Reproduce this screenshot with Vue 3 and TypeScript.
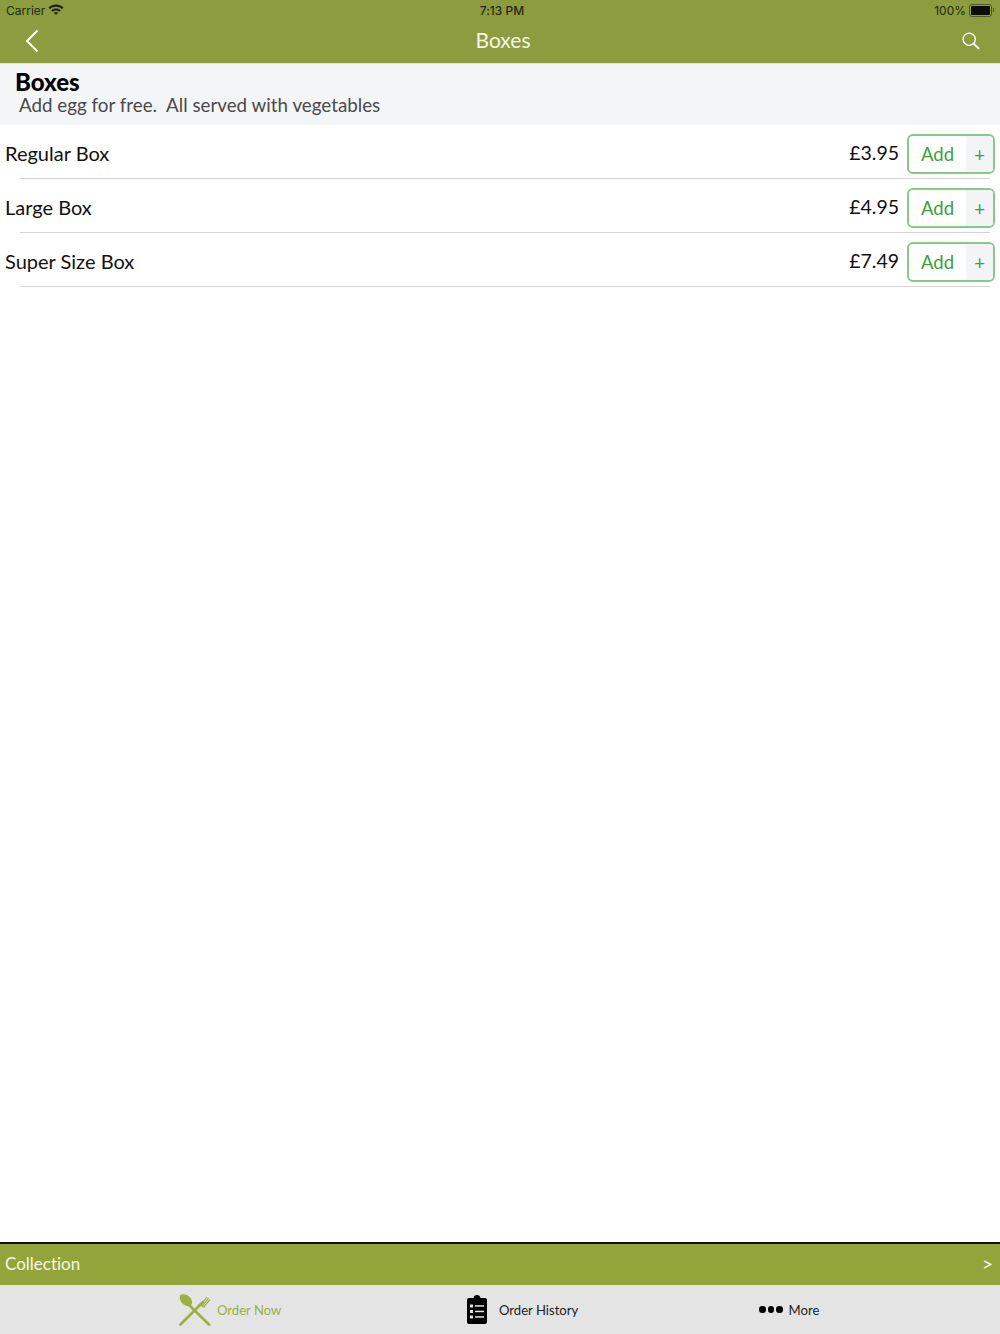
<template>
  <div class="page">
    <header class="top">
      <div class="status">
        <div class="status__left">
          <span>Carrier</span>
          <svg class="wifi" width="16" height="11" viewBox="0 0 16 11">
            <path d="M0.5 3.6 C4.7 -0.4 11.3 -0.4 15.5 3.6 L14 5.2 C10.6 2 5.4 2 2 5.2 Z" />
            <path d="M3.2 6.2 C5.9 3.8 10.1 3.8 12.8 6.2 L11.3 7.7 C9.4 6 6.6 6 4.7 7.7 Z" />
            <path d="M5.9 8.8 C7.1 7.8 8.9 7.8 10.1 8.8 L8 11 Z" />
          </svg>
        </div>
        <span class="status__time">7:13 PM</span>
        <div class="status__right">
          <span>100%</span>
          <span class="battery"><span class="battery__fill"></span></span>
          <span class="battery__tip"></span>
        </div>
      </div>
      <nav class="nav">
        <svg class="nav__back" width="14" height="24" viewBox="0 0 14 24">
          <path d="M12.5 1.5 L2 12 L12.5 22.5" />
        </svg>
        <span class="nav__title">Boxes</span>
        <svg class="nav__search" width="18" height="18" viewBox="0 0 20 20">
          <circle cx="8" cy="8" r="6.8" />
          <path d="M12.8 12.8 L18.8 18.6" class="nav__handle" />
        </svg>
      </nav>
    </header>

    <section class="intro">
      <h1>Boxes</h1>
      <p>Add egg for free.&nbsp; All served with vegetables</p>
    </section>

    <main class="list">
      <div v-for="item in items" :key="item.name" class="row">
        <span class="row__name">{{ item.name }}</span>
        <span class="row__price">{{ item.price }}</span>
        <button class="add" type="button">
          <span class="add__label">Add</span>
          <span class="add__plus">+</span>
        </button>
      </div>
    </main>

    <footer class="bottom">
      <div class="basket">
        <span>Collection</span>
        <span class="basket__arrow">&gt;</span>
      </div>
      <div class="tabs">
        <div class="tab tab--active tab--order">
          <svg width="32" height="32" viewBox="0 0 32 32">
            <path class="cutlery-line" d="M8 9 L30 30.5" />
            <path class="cutlery-line" d="M24 8 L1.5 30.5" />
            <path class="cutlery-fill" d="M1.2 1 C4.4 -0.8 10 1 12.2 5 C14 8.4 12.8 11.4 10.4 12 C6.8 12.8 2.6 9.8 1.2 6 C0.6 4.2 0.4 2.2 1.2 1 Z" />
            <path class="cutlery-fork" d="M22 10.5 L28 3 M23.6 11.6 L29.6 4.2 M25.2 12.4 L31 5.6 M22 10.5 C22.6 12.4 24.6 13.4 26 12.4" />
          </svg>
          <span>Order Now</span>
        </div>
        <div class="tab tab--history">
          <svg width="20" height="29" viewBox="0 0 20 29">
            <path d="M2 3 H6.5 C6.8 1.2 8.2 0 10 0 C11.8 0 13.2 1.2 13.5 3 H18 C19.1 3 20 3.9 20 5 V27 C20 28.1 19.1 29 18 29 H2 C0.9 29 0 28.1 0 27 V5 C0 3.9 0.9 3 2 3 Z" />
            <g class="list-marks">
              <rect x="3" y="9.5" width="3" height="3" />
              <rect x="3" y="15" width="3" height="3" />
              <rect x="3" y="20.5" width="3" height="3" />
              <rect x="8" y="10.2" width="9" height="1.5" />
              <rect x="8" y="15.7" width="9" height="1.5" />
              <rect x="8" y="21.2" width="9" height="1.5" />
            </g>
          </svg>
          <span>Order History</span>
        </div>
        <div class="tab tab--more">
          <span class="dots"><i></i><i></i><i></i></span>
          <span>More</span>
        </div>
      </div>
    </footer>
  </div>
</template>

<script setup lang="ts">
type Item = {
  name: string
  price: string
}

const items: Item[] = [
  { name: 'Regular Box', price: '£3.95' },
  { name: 'Large Box', price: '£4.95' },
  { name: 'Super Size Box', price: '£7.49' }
]
</script>

<style>
html,
body {
  margin: 0;
  background: #fff;
}
</style>

<style scoped>
.page {
  display: flex;
  flex-direction: column;
  height: 1334px;
  font-family: Lato, "Open Sans", sans-serif;
  font-variant-ligatures: none;
  color: #111;
  background: #fff;
}

.top {
  height: 63px;
  background: #8c9c3f;
  flex: none;
}

.status {
  display: grid;
  grid-template-columns: 1fr auto 1fr;
  align-items: center;
  height: 20px;
  padding: 0 6px;
  font-family: Inter, sans-serif;
  font-size: 12px;
  color: #262a14;
}

.status__left {
  display: flex;
  align-items: center;
  gap: 3px;
}

.wifi {
  fill: #1d2010;
  margin-top: -2px;
}

.status__time {
  margin-left: 4px;
  font-weight: 500;
}

.status__right {
  display: flex;
  align-items: center;
  justify-content: flex-end;
}

.battery {
  width: 19px;
  height: 9px;
  margin-left: 3px;
  padding: 1px;
  border: 1px solid #4f5826;
  border-radius: 3px;
}

.battery__fill {
  display: block;
  height: 100%;
  background: #0c0d06;
  border-radius: 1px;
}

.battery__tip {
  width: 1px;
  height: 4px;
  margin-left: 1px;
  background: #4f5826;
}

.nav {
  display: flex;
  align-items: center;
  justify-content: space-between;
  height: 43px;
  padding: 0 20px 1px 25px;
  box-sizing: border-box;
}

.nav__back path,
.nav__search circle,
.nav__handle {
  fill: none;
  stroke: #fff;
  stroke-width: 2;
}

.nav__search circle {
  stroke-width: 1.5;
}

.nav__search {
  margin-bottom: 1px;
}

.nav__title {
  margin: 0 0 4px 5px;
  font-size: 21px;
  color: #f4f6e6;
}

.intro {
  flex: none;
  height: 62px;
  box-sizing: border-box;
  padding: 5px 15px 0;
  background: #f4f5f7;
  border-top: 1px solid #e3e5d8;
}

.intro h1 {
  margin: 0;
  font-size: 24px;
  line-height: 26px;
  font-weight: 900;
  color: #000;
}

.intro p {
  margin: 0 0 0 4px;
  font-size: 18.8px;
  line-height: 20px;
  color: #4a4a4a;
}

.list {
  flex: 1;
}

.row {
  position: relative;
  display: flex;
  align-items: center;
  height: 54px;
  padding: 0 5px;
  box-sizing: border-box;
  font-size: 20px;
}

.row::after {
  content: "";
  position: absolute;
  left: 20px;
  right: 10px;
  bottom: 0;
  height: 1px;
  background: #d4d4d4;
}

.row__name {
  flex: 1;
  margin-top: 1px;
}

.row__price {
  margin: 1px 8px 0 0;
  font-size: 19.5px;
}

.add {
  display: flex;
  width: 88px;
  height: 40px;
  padding: 0;
  margin-top: 4px;
  box-sizing: border-box;
  background: #fff;
  border: 2px solid #8ac88a;
  border-radius: 6px;
  font-family: inherit;
  color: #3aa03a;
  overflow: hidden;
}

.add__label {
  flex: 1;
  font-size: 18.5px;
  line-height: 36px;
  text-align: center;
}

.add__plus {
  width: 27px;
  font-size: 18.5px;
  line-height: 38px;
  text-align: center;
  background: #f2f4f6;
}

.bottom {
  flex: none;
}

.basket {
  display: flex;
  align-items: center;
  justify-content: space-between;
  height: 38px;
  padding: 0 7px 3px 5px;
  background: #93a53a;
  border-top: 2px solid #111;
  font-size: 17px;
  color: #f4f6e6;
}

.basket__arrow {
  font-size: 19px;
}

.tabs {
  position: relative;
  display: flex;
  height: 49px;
  background: #e4e4e4;
  font-size: 13.1px;
  color: #222;
}

.tab {
  display: flex;
  align-items: center;
}

.tab--order {
  gap: 6px;
  margin-left: 179px;
  width: 288px;
}

.tab--history {
  gap: 12px;
  width: 292px;
}

.tab--more {
  gap: 6px;
}

.tab--active {
  color: #9bb040;
}

.cutlery-line {
  fill: none;
  stroke: #9bb040;
  stroke-width: 2.6;
  stroke-linecap: round;
}

.cutlery-fill {
  fill: #9bb040;
}

.cutlery-fork {
  fill: none;
  stroke: #9bb040;
  stroke-width: 1.2;
}

.list-marks {
  fill: #e4e4e4;
}

.dots {
  display: flex;
  gap: 2px;
}

.dots i {
  width: 6.5px;
  height: 6.5px;
  border-radius: 50%;
  background: #000;
}
</style>
